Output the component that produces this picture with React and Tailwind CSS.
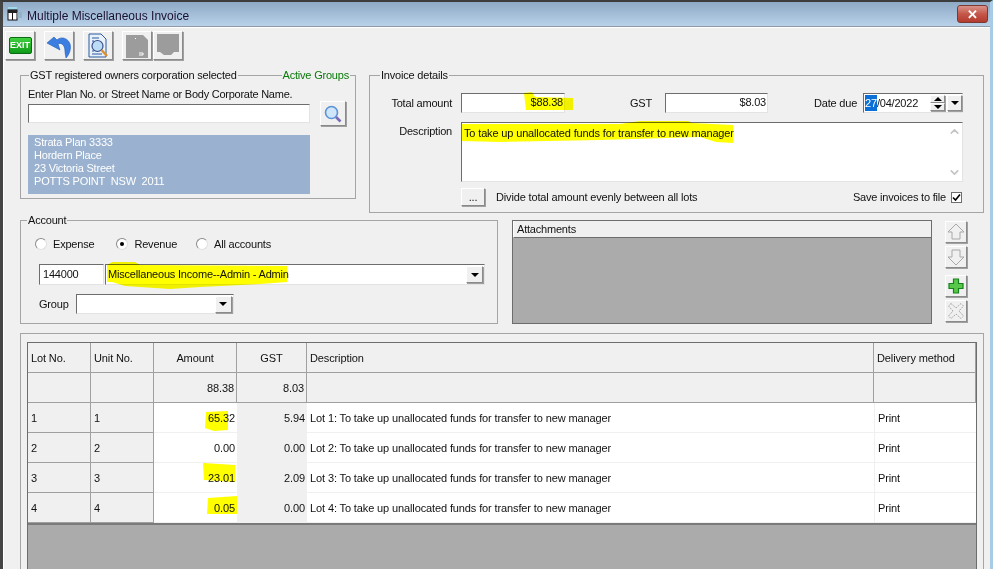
import { ChevronDown, ChevronUp } from 'lucide-react';

const raised = 'border border-t-white border-l-white border-r-[#8a8a8a] border-b-[#8a8a8a] shadow-[1px_1px_0_#a0a0a0] bg-[#f0f0f0]';
const sunken = 'border border-t-[#6d6d6d] border-l-[#6d6d6d] border-r-[#e3e3e3] border-b-[#e3e3e3] bg-white';
const fixedCell = 'h-[30px] pt-px bg-[#f0f0f0] border-r border-b border-[#a0a0a0] flex items-center px-[3px]';
const totalCell = 'h-[30px] pt-px bg-[#f0f0f0] border-r border-b border-[#a0a0a0] flex items-center justify-end px-[2px]';

const ROWS = [
  ['1', '65.32', '5.94'],
  ['2', '0.00', '0.00'],
  ['3', '23.01', '2.09'],
  ['4', '0.05', '0.00'],
];

function Arrow() {
  return <span className="w-0 h-0 border-x-[4px] border-x-transparent border-t-[4px] border-t-black" />;
}

function DropButton() {
  return (
    <div className={`${raised} w-[17px] h-[17px] flex items-center justify-center mr-px`}>
      <Arrow />
    </div>
  );
}

function Radio({ checked, label, className }) {
  return (
    <div className={`flex items-center gap-[6px] ${className}`}>
      <span className="w-[12px] h-[12px] rounded-full bg-white border border-t-[#8a8a8a] border-l-[#8a8a8a] border-r-[#e0e0e0] border-b-[#e0e0e0] flex items-center justify-center">
        {checked && <span className="w-[4px] h-[4px] rounded-full bg-black" />}
      </span>
      <span>{label}</span>
    </div>
  );
}

function Group({ legend, className, children }) {
  return (
    <div className={`relative border border-[#a5a5a5] ${className}`}>
      {legend}
      {children}
    </div>
  );
}

function Legend({ children, className }) {
  return <span className={`absolute -top-[8px] bg-[#f0f0f0] px-px leading-[14px] ${className}`}>{children}</span>;
}

function ToolButton({ children, className = '' }) {
  return <div className={`${raised} w-[30px] h-[29px] flex items-center justify-center ${className}`}>{children}</div>;
}

function SideButton({ children, className = '' }) {
  return <div className={`${raised} w-[22px] h-[22px] flex items-center justify-center ${className}`}>{children}</div>;
}

export default function App() {
  return (
    <div className="w-[993px] h-[569px] overflow-hidden flex flex-col bg-[#f0f0f0] text-[11px] tracking-[-0.2px] text-[#111] border-t-2 border-t-[#3c3c3c] border-l-[3px] border-l-[#444] border-r-[3px] border-r-[#a8cce6] shadow-[inset_1px_0_0_#fff] relative" style={{ fontFamily: '"Liberation Sans", Arial, sans-serif' }}>
      {/* Title bar */}
      <div className="h-[25px] shrink-0 flex items-center bg-gradient-to-b from-[#8ea9c5] to-[#b9d2ea] border-b border-[#8f9aa6] pl-[4px] pr-[2px]">
        <svg width="16" height="14" viewBox="0 0 16 14">
          <rect x="1" y="0" width="9" height="2" fill="#9fd8e8" />
          <rect x="1" y="3" width="9" height="10" fill="#fff" stroke="#111" />
          <rect x="1" y="3" width="9" height="3" fill="#222" />
          <rect x="5" y="6" width="1" height="7" fill="#111" />
          <rect x="10" y="5" width="5" height="6" fill="#8ab" opacity="0.6" />
        </svg>
        <span className="ml-[4px] mt-[3px] text-[12px] tracking-normal text-[#1a1030]">Multiple Miscellaneous Invoice</span>
        <div className="ml-auto w-[31px] h-[18px] rounded-[3px] bg-gradient-to-b from-[#d9938a] via-[#c4574a] to-[#b23a2c] border border-[#7a3a34] flex items-center justify-center text-white font-bold text-[13px] leading-none">✕</div>
      </div>

      {/* Toolbar */}
      <div className="h-[45px] shrink-0 flex items-start pt-[3px] pl-[2px] border-t border-white">
        <ToolButton>
          <div className="w-[23px] h-[17px] rounded-[2px] bg-gradient-to-b from-[#3fd13f] to-[#0c9a18] border border-[#0a6b12] flex items-center justify-center text-white font-bold text-[9px] tracking-normal leading-none">EXIT</div>
        </ToolButton>
        <ToolButton className="ml-[9px]">
          <svg width="26" height="26" viewBox="0 0 26 26">
            <path d="M8 4 L1 10 L14 17 L12 11 C15 9 19 12 19 18 C19 21 20 24 20 25 C23 22 25.5 16 24 11 C22 5 15 3 11 7 Z" fill="#3b7de0" stroke="#1c5ab8" strokeWidth="0.6" />
          </svg>
        </ToolButton>
        <ToolButton className="ml-[9px]">
          <svg width="24" height="26" viewBox="0 0 24 26">
            <path d="M3 1 H15 L20 6 V24 H3 Z" fill="#e8f0fa" stroke="#2b5a9e" />
            <path d="M6 5 H13 M6 8 H8 M6 11 H7 M6 14 H7 M6 18 H8 M6 21 H16" stroke="#2b5a9e" />
            <circle cx="11.5" cy="13" r="5.5" fill="#bcdcf5" stroke="#3a4f8c" strokeWidth="1.2" />
            <path d="M15.5 17 L21 23" stroke="#e0902a" strokeWidth="2.5" />
          </svg>
        </ToolButton>
        <ToolButton className="ml-[9px]">
          <svg width="24" height="24" viewBox="0 0 24 24">
            <path d="M1 1 H18 L23 6 V24 H1 Z" fill="#9c9c9c" />
            <rect x="10" y="4" width="1" height="1" fill="#fff" />
            <path d="M14 19 H18 V21 H14" fill="none" stroke="#fff" />
          </svg>
        </ToolButton>
        <ToolButton className="ml-px">
          <svg width="24" height="24" viewBox="0 0 24 24">
            <path d="M1 0 H23 V18 H18 L15 21 H8 L4 18 H1 Z" fill="#9c9c9c" />
          </svg>
        </ToolButton>
      </div>

      {/* Owners corporation and invoice details */}
      <div className="flex items-start shrink-0 pl-[17px] mt-[3px]">
        <Group
          className="w-[336px] h-[124px] px-[7px] pt-[12px]"
          legend={
            <>
              <Legend className="left-[8px]">GST registered owners corporation selected</Legend>
              <Legend className="right-[5px] text-[#0a7a0a]">Active Groups</Legend>
            </>
          }
        >
          <div className="leading-[13px] tracking-[-0.25px]">Enter Plan No. or Street Name or Body Corporate Name.</div>
          <div className="flex items-start">
            <div className={`${sunken} w-[282px] h-[19px] mt-[3px]`} />
            <div className={`${raised} w-[26px] h-[25px] ml-[10px] flex items-center justify-center`}>
              <svg width="18" height="18" viewBox="0 0 18 18">
                <circle cx="7.5" cy="7.5" r="6" fill="#cfe6fa" stroke="#5b93d6" strokeWidth="1.6" />
                <path d="M12 12 L16.5 16.5" stroke="#7a6bb8" strokeWidth="2.6" />
              </svg>
            </div>
          </div>
          <div className="w-[282px] h-[59px] mt-[9px] bg-[#9ab2cf] text-white px-[6px] leading-[13px] pt-[1px]">
            <div>Strata Plan 3333</div>
            <div>Hordern Place</div>
            <div>23 Victoria Street</div>
            <div>POTTS POINT&nbsp; NSW&nbsp; 2011</div>
          </div>
        </Group>

        <Group
          className="w-[615px] h-[138px] ml-[13px]"
          legend={<Legend className="left-[10px]">Invoice details</Legend>}
        >
          <div className="flex items-center mt-[17px] h-[20px]">
            <span className="w-[82px] text-right">Total amount</span>
            <div className={`${sunken} w-[104px] h-[20px] ml-[9px] text-right pr-[1px] leading-[17px]`}>$88.38</div>
            <span className="ml-[65px]">GST</span>
            <div className={`${sunken} w-[103px] h-[20px] ml-[13px] text-right pr-[1px] leading-[17px]`}>$8.03</div>
            <span className="ml-[46px]">Date due</span>
            <div className={`${sunken} w-[100px] h-[20px] ml-[6px] flex items-center pl-[1px]`}>
              <span className="bg-[#0a6fd6] text-white">27</span>
              <span>/04/2022</span>
              <div className="ml-auto flex flex-col mr-[1px]">
                <div className={`${raised} w-[15px] h-[8px] flex items-center justify-center`}>
                  <span className="w-0 h-0 border-x-[4px] border-x-transparent border-b-[4px] border-b-black" />
                </div>
                <div className={`${raised} w-[15px] h-[8px] flex items-center justify-center`}>
                  <Arrow />
                </div>
              </div>
              <div className={`${raised} w-[15px] h-[16px] ml-px flex items-center justify-center`}>
                <Arrow />
              </div>
            </div>
          </div>
          <div className="flex items-start mt-[9px]">
            <span className="w-[82px] text-right mt-[1px]">Description</span>
            <div className={`${sunken} w-[502px] h-[60px] ml-[9px] flex justify-between pl-[2px] pt-[2px]`}>
              <span className="tracking-[-0.15px]">To take up unallocated funds for transfer to new manager</span>
              <div className="w-[16px] flex flex-col justify-between items-center text-[#c4c4c4] pb-[2px]">
                <ChevronUp size={13} strokeWidth={3} />
                <ChevronDown size={13} strokeWidth={3} />
              </div>
            </div>
          </div>
          <div className="flex items-center mt-[6px] pl-[91px]">
            <div className={`${raised} w-[24px] h-[18px] flex items-center justify-center leading-none`}>...</div>
            <span className="ml-[11px] tracking-[-0.15px]">Divide total amount evenly between all lots</span>
            <span className="ml-auto">Save invoices to file</span>
            <div className="w-[11px] h-[11px] ml-[5px] mr-[21px] bg-white border border-[#6d6d6d] flex items-center justify-center">
              <svg width="9" height="9" viewBox="0 0 9 9">
                <path d="M1 4.5 L3.5 7 L8 1.5" fill="none" stroke="#000" strokeWidth="1.6" />
              </svg>
            </div>
          </div>
        </Group>
      </div>

      {/* Account and attachments */}
      <div className="flex items-start shrink-0 pl-[17px] mt-[7px]">
        <Group
          className="w-[478px] h-[104px] pt-[15px]"
          legend={<Legend className="left-[6px]">Account</Legend>}
        >
          <div className="flex items-center h-[16px]">
            <Radio label="Expense" className="ml-[14px]" />
            <Radio checked label="Revenue" className="ml-[22px]" />
            <Radio label="All accounts" className="ml-[19px]" />
          </div>
          <div className="flex items-center mt-[12px] ml-[18px]">
            <div className={`${sunken} w-[65px] h-[21px] pl-[3px] leading-[18px]`}>144000</div>
            <div className={`${sunken} w-[380px] h-[21px] ml-px flex items-center justify-between pl-[2px]`}>
              <span>Miscellaneous Income--Admin - Admin</span>
              <DropButton />
            </div>
          </div>
          <div className="flex items-center mt-[9px] ml-[18px]">
            <span>Group</span>
            <div className={`${sunken} w-[158px] h-[20px] ml-[7px] flex items-center justify-end`}>
              <DropButton />
            </div>
          </div>
        </Group>

        <div className="w-[420px] h-[104px] ml-[14px] border border-[#6d6d6d] bg-[#ababab] flex flex-col">
          <div className="h-[17px] bg-[#f0f0f0] border-b border-[#6d6d6d] border-l border-l-white px-[3px] leading-[16px]">Attachments</div>
        </div>

        <div className="flex flex-col ml-[13px] mt-px">
          <SideButton>
            <svg width="18" height="18" viewBox="0 0 18 18"><path d="M9 1 L17 9 H13 V16 H5 V9 H1 Z" fill="none" stroke="#a8a8a8" /></svg>
          </SideButton>
          <SideButton className="mt-[3px]">
            <svg width="18" height="18" viewBox="0 0 18 18"><path d="M5 2 H13 V9 H17 L9 17 L1 9 H5 Z" fill="none" stroke="#a8a8a8" /></svg>
          </SideButton>
          <SideButton className="mt-[7px]">
            <svg width="18" height="18" viewBox="0 0 18 18"><path d="M6.5 2 H11.5 V6.5 H16 V11.5 H11.5 V16 H6.5 V11.5 H2 V6.5 H6.5 Z" fill="#58c84a" stroke="#17801c" strokeWidth="1.2" /></svg>
          </SideButton>
          <SideButton className="mt-[3px]">
            <svg width="18" height="18" viewBox="0 0 18 18"><path d="M4 1.5 L9 6 L14 1.5 L16.5 4 L12 9 L16.5 14 L14 16.5 L9 12 L4 16.5 L1.5 14 L6 9 L1.5 4 Z" fill="none" stroke="#a8a8a8" strokeDasharray="2 1" /></svg>
          </SideButton>
        </div>
      </div>

      {/* Lots table */}
      <div className="flex-1 min-h-0 w-[964px] ml-[17px] mt-[9px] border border-[#a5a5a5] border-b-0 pt-[8px] pl-[6px] pr-[6px] flex">
        <div className="w-[951px] border border-b-0 border-[#6d6d6d] bg-[#ababab] overflow-hidden">
          <div className="grid grid-cols-[63px_63px_83px_70px_567px_1fr] bg-white border-b-2 border-[#7a7a7a] tracking-[-0.12px]">
            <div className={fixedCell}>Lot No.</div>
            <div className={fixedCell}>Unit No.</div>
            <div className={`${fixedCell} justify-center`}>Amount</div>
            <div className={`${fixedCell} justify-center`}>GST</div>
            <div className={fixedCell}>Description</div>
            <div className={fixedCell}>Delivery method</div>
            <div className={fixedCell} />
            <div className={fixedCell} />
            <div className={totalCell}>88.38</div>
            <div className={totalCell}>8.03</div>
            <div className={fixedCell} />
            <div className={fixedCell} />
            {ROWS.map(([lot, amount, gst]) => (
              <div key={lot} className="contents">
                <div className={fixedCell}>{lot}</div>
                <div className={fixedCell}>{lot}</div>
                <div className="h-[30px] pt-px bg-white border-b border-[#f0f0f0] flex items-center justify-end px-[2px]">{amount}</div>
                <div className="h-[30px] pt-px bg-[#f0f0f0] border-b border-[#f0f0f0] flex items-center justify-end px-[2px]">{gst}</div>
                <div className="h-[30px] pt-px bg-white border-b border-[#f0f0f0] flex items-center px-[3px]">Lot {lot}: To take up unallocated funds for transfer to new manager</div>
                <div className="h-[30px] pt-px bg-white border-b border-l border-[#f0f0f0] flex items-center px-[3px]">Print</div>
              </div>
            ))}
          </div>
        </div>
      </div>

      {/* Highlighter marks */}
      <svg className="absolute -left-[3px] -top-[2px] pointer-events-none mix-blend-multiply" width="993" height="569">
        <g fill="#ffff00">
          <polygon points="524,93 532,92 535,97 573,98 573,110 526,110" />
          <polygon points="462,124 620,124 640,121 688,121 692,123 733,125 733,143 716,142 700,137 600,140 500,142 462,141" />
          <polygon points="107,265 112,262 135,262 140,265 287,266 287,282 260,284 200,287 170,289 125,286 112,282 107,282" />
          <polygon points="206,412 228,411 228,430 214,431 205,428" />
          <polygon points="203,463 235,465 235,482 204,480" />
          <polygon points="208,498 237,496 237,514 207,514" />
        </g>
      </svg>
    </div>
  );
}
